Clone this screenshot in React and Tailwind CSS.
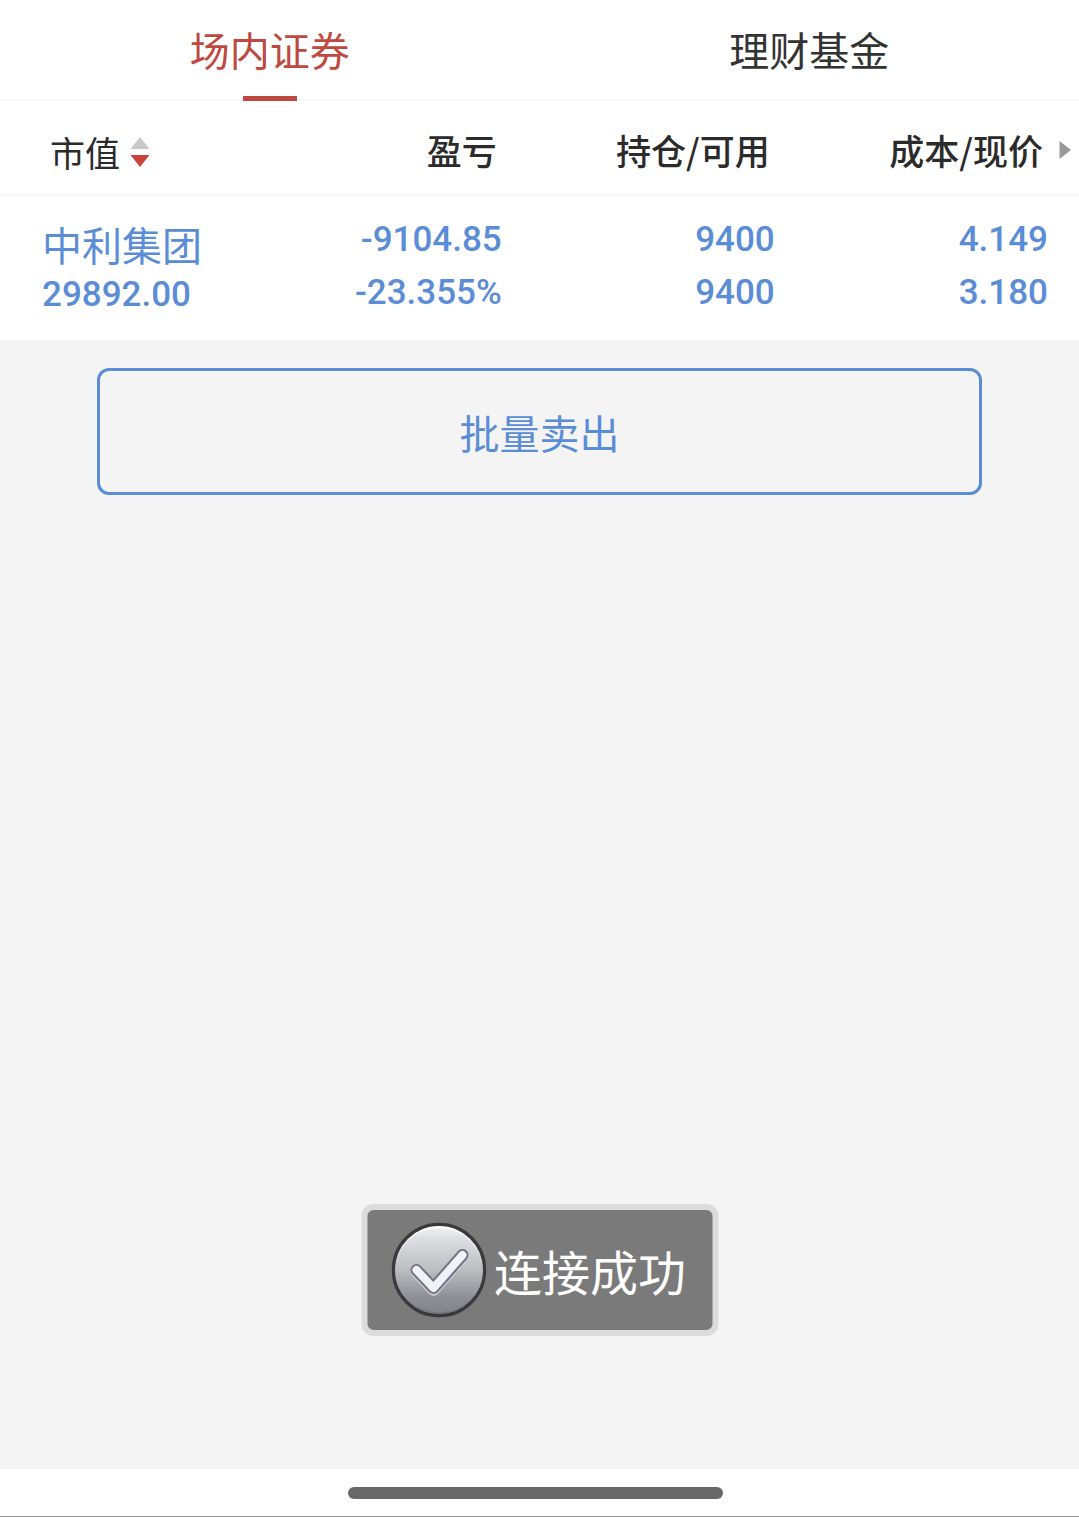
import { useState } from 'react'

const TABS = ['场内证券', '理财基金'];

const HOLDINGS = [
  {
    name: '中利集团',
    marketValue: '29892.00',
    profit: '-9104.85',
    profitRate: '-23.355%',
    position: '9400',
    available: '9400',
    cost: '4.149',
    price: '3.180',
  },
];

function SortArrows() {
  return (
    <svg width="20" height="32" viewBox="0 0 20 32" aria-hidden="true">
      <path d="M10 1 L19.5 13 H0.5 Z" fill="#c8c8c8" />
      <path d="M0.5 19 H19.5 L10 31 Z" fill="#cb4239" />
    </svg>
  );
}

function CheckBadge() {
  return (
    <svg width="95" height="96" viewBox="0 0 95 96" aria-hidden="true">
      <defs>
        <linearGradient id="badge" x1="0" y1="0" x2="0" y2="1">
          <stop offset="0" stopColor="#f6f6f8" />
          <stop offset="0.15" stopColor="#dedfe3" />
          <stop offset="0.5" stopColor="#bcbdc1" />
          <stop offset="0.8" stopColor="#8e8f94" />
          <stop offset="1" stopColor="#828388" />
        </linearGradient>
        <linearGradient id="rim" x1="0" y1="0" x2="0" y2="1">
          <stop offset="0" stopColor="#ffffff" />
          <stop offset="1" stopColor="#77787d" />
        </linearGradient>
      </defs>
      <circle cx="47.5" cy="48" r="45.5" fill="url(#badge)" stroke="#3a3a3c" strokeWidth="3.5" />
      <circle cx="47.5" cy="48" r="43" fill="none" stroke="url(#rim)" strokeWidth="2" />
      <g fill="none" strokeLinecap="round" strokeLinejoin="round">
        <path d="M25 50 L42 68 L71 35" stroke="#c9cad0" strokeWidth="12" />
        <path d="M25 48 L42 66 L71 33" stroke="#6e7284" strokeWidth="12" />
        <path d="M25 48 L42 66 L71 33" stroke="#f1f2f8" strokeWidth="8" />
      </g>
    </svg>
  );
}

function Tabs({ active, onChange }) {
  return (
    <nav className="flex border-b-2 border-[#f7f7f7] bg-white">
      {TABS.map((tab, index) => (
        <button
          key={tab}
          type="button"
          onClick={() => onChange(index)}
          className={
            index === active
              ? 'relative flex-1 h-[99px] text-[40px] leading-[99px] text-[#bf4840]'
              : 'relative flex-1 h-[99px] text-[40px] leading-[99px] text-[#333333]'
          }
        >
          {tab}
          {index === active && (
            <span className="absolute left-1/2 -bottom-[3px] h-[6px] w-[54px] -translate-x-1/2 bg-[#bf4840]" />
          )}
        </button>
      ))}
    </nav>
  );
}

function HoldingsTable() {
  return (
    <table className="w-full table-fixed bg-white">
      <thead className="text-[35px] leading-[52px] text-[#2b2b2b]">
        <tr className="h-[94px] border-b-2 border-[#f5f5f5]">
          <th className="pl-[50px] pt-2 text-left font-normal">
            <button type="button" className="flex items-center gap-[10px]">
              市值
              <SortArrows />
            </button>
          </th>
          <th className="w-[25.3%] pr-[5px] pt-1 text-right font-medium">盈亏</th>
          <th className="w-[25.3%] pr-[5px] pt-1 text-right font-medium">持仓/可用</th>
          <th className="w-[28.2%] pr-2 pt-1 font-medium">
            <div className="flex items-center justify-end gap-4">
              成本/现价
              <svg width="12" height="20" viewBox="0 0 12 20" aria-hidden="true">
                <path d="M0.5 1 L12 10 L0.5 19 Z" fill="#999999" />
              </svg>
            </div>
          </th>
        </tr>
      </thead>
      <tbody className="font-[Roboto,'Noto_Sans_CJK_SC',sans-serif] text-[35px] font-medium leading-[53px] text-[#5b8dd6]">
        {HOLDINGS.map((item) => (
          <tr key={item.name} className="h-[145px] align-top text-right">
            <td className="pl-[42px] pt-7 text-left">
              <div className="text-[40px] font-normal leading-[48px]">{item.name}</div>
              <div className="leading-[45px]">{item.marketValue}</div>
            </td>
            <td className="pt-[17px]">
              <div>{item.profit}</div>
              <div>{item.profitRate}</div>
            </td>
            <td className="pt-[17px]">
              <div>{item.position}</div>
              <div>{item.available}</div>
            </td>
            <td className="pr-[31px] pt-[17px]">
              <div>{item.cost}</div>
              <div>{item.price}</div>
            </td>
          </tr>
        ))}
      </tbody>
    </table>
  );
}

function Toast({ message }) {
  return (
    <div
      role="status"
      className="absolute bottom-[133px] left-1/2 flex -translate-x-1/2 items-center gap-2 whitespace-nowrap rounded-xl border-[6px] border-[#dcdcdc] bg-[#7a7a7a] py-3 pl-6 pr-[26px] text-[48px] leading-[94px] text-white"
    >
      <CheckBadge />
      {message}
    </div>
  );
}

function App() {
  const [activeTab, setActiveTab] = useState(0);

  return (
    <div className="flex min-h-screen flex-col bg-[#f4f4f4] font-['Noto_Sans_CJK_SC',sans-serif]">
      <Tabs active={activeTab} onChange={setActiveTab} />
      <main className="relative flex-1">
        <HoldingsTable />
        <button
          type="button"
          className="mx-auto mt-7 block h-[127px] w-[82%] rounded-xl border-[3px] border-[#5b8dd6] text-[40px] text-[#5b8dd6]"
        >
          批量卖出
        </button>
        <Toast message="连接成功" />
      </main>
      {/* system gesture bar */}
      <footer className="flex h-12 items-center justify-center border-b border-[#999999] bg-white pr-2">
        <div className="h-3 w-[35%] rounded-full bg-[#686868]" />
      </footer>
    </div>
  );
}

export default App
